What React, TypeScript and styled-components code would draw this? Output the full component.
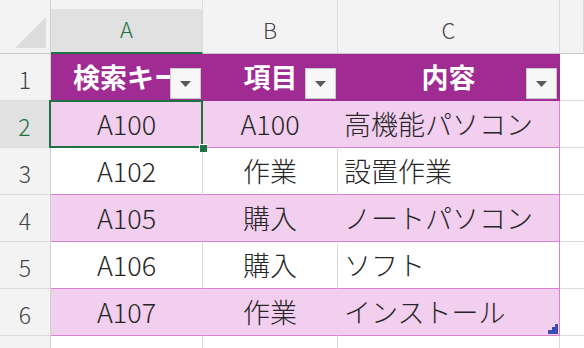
import React from "react";
import styled, { createGlobalStyle } from "styled-components";

const Global = createGlobalStyle`
  html, body { margin: 0; padding: 0; background: #ffffff; }
  body { font-family: "Noto Sans CJK JP", "Noto Sans", sans-serif; overflow: hidden; }
`;

const GREEN = "#1f7244";
const PURPLE = "#a02b93";
const PINK = "#f2ceef";
const PINK_LINE = "#d683cd";
const GRID = "#dadada";
const HEAD_BG = "#f3f3f3";
const HEAD_SEL = "#e1e1e1";

const Sheet = styled.div`
  display: grid;
  grid-template-columns: 51px 152px 135px 222px 1fr;
  grid-template-rows: 54px repeat(7, 47px);
  width: 584px;
  height: 348px;
  overflow: hidden;
`;

const Corner = styled.div`
  position: relative;
  background: ${HEAD_BG};
  border-right: 1px solid #d0d0d0;
  border-bottom: 1px solid #c8c8c8;
  box-sizing: border-box;
`;

const CornerTriangle = styled.svg`
  position: absolute;
  left: 15px;
  top: 17px;
`;

const ColHead = styled.div<{ $selected?: boolean }>`
  box-sizing: border-box;
  display: flex;
  align-items: center;
  justify-content: center;
  padding-top: 4px;
  font-size: 22px;
  font-weight: 300;
  color: ${(p) => (p.$selected ? GREEN : "#444444")};
  background: ${(p) =>
    p.$selected
      ? `linear-gradient(to bottom, ${HEAD_BG} 9px, ${HEAD_SEL} 9px)`
      : HEAD_BG};
  border-right: 1px solid #dcdcdc;
  border-bottom: ${(p) => (p.$selected ? `2px solid ${GREEN}` : "1px solid #c8c8c8")};
`;

const RowHead = styled.div<{ $selected?: boolean }>`
  box-sizing: border-box;
  text-align: center;
  line-height: 47px;
  padding-top: 2px;
  font-size: 23px;
  font-weight: 300;
  color: ${(p) => (p.$selected ? GREEN : "#444444")};
  background: ${(p) => (p.$selected ? HEAD_SEL : HEAD_BG)};
  border-right: ${(p) => (p.$selected ? `2px solid ${GREEN}` : "1px solid #d0d0d0")};
  border-bottom: 1px solid #dcdcdc;
`;

const HeaderCell = styled.div<{ $last?: boolean }>`
  position: relative;
  box-sizing: border-box;
  background: ${PURPLE};
  color: #ffffff;
  font-weight: 700;
  font-size: 27px;
  line-height: 46px;
  text-align: center;
  white-space: nowrap;
  overflow: hidden;
  border-right: ${(p) => (p.$last ? `1px solid ${PURPLE}` : "none")};
  border-bottom: 1px solid ${PURPLE};
`;

const FilterButton = styled.div`
  position: absolute;
  right: 2px;
  bottom: 1px;
  width: 31px;
  height: 31px;
  box-sizing: border-box;
  background: #f7f7f7;
  border: 1px solid #c9c9c9;
  display: flex;
  align-items: center;
  justify-content: center;
`;

const DataCell = styled.div<{
  $band: boolean;
  $align: "center" | "left";
  $last?: boolean;
}>`
  position: relative;
  box-sizing: border-box;
  background: ${(p) => (p.$band ? PINK : "#ffffff")};
  color: #262626;
  font-size: 27px;
  font-weight: 300;
  line-height: 46px;
  white-space: nowrap;
  text-align: ${(p) => p.$align};
  padding-left: ${(p) => (p.$align === "left" ? "6px" : "0")};
  border-bottom: 1px solid ${PINK_LINE};
  border-right: 1px solid
    ${(p) => (p.$last ? PINK_LINE : p.$band ? PINK : GRID)};
`;

const EmptyCell = styled.div<{ $lastCol?: boolean }>`
  box-sizing: border-box;
  background: #ffffff;
  border-bottom: 1px solid ${GRID};
  border-right: ${(p) => (p.$lastCol ? "none" : `1px solid ${GRID}`)};
`;

const Selection = styled.div`
  position: absolute;
  z-index: 2;
  left: -2px;
  top: -1px;
  right: -1px;
  bottom: -1px;
  border: 2px solid ${GREEN};
  pointer-events: none;
`;

const FillHandle = styled.div`
  position: absolute;
  right: -6px;
  bottom: -6px;
  width: 7px;
  height: 7px;
  background: ${GREEN};
  border-left: 1px solid #ffffff;
  border-top: 1px solid #ffffff;
`;

const ResizeHandle = styled.svg`
  position: absolute;
  right: 1px;
  bottom: 1px;
`;

const Arrow = () => (
  <svg width="11" height="6" viewBox="0 0 11 6">
    <polygon points="0,0 11,0 5.5,6" fill="#5a5a5a" />
  </svg>
);

type Row = { a: string; b: string; c: string };

const rows: Row[] = [
  { a: "A100", b: "A100", c: "高機能パソコン" },
  { a: "A102", b: "作業", c: "設置作業" },
  { a: "A105", b: "購入", c: "ノートパソコン" },
  { a: "A106", b: "購入", c: "ソフト" },
  { a: "A107", b: "作業", c: "インストール" },
];

const headers = ["検索キー", "項目", "内容"];

export default function App() {
  return (
    <>
      <Global />
      <Sheet>
        <Corner>
          <CornerTriangle width="31" height="31" viewBox="0 0 31 31">
            <polygon points="31,0 31,31 0,31" fill="#dcdcdc" />
          </CornerTriangle>
        </Corner>
        <ColHead $selected>A</ColHead>
        <ColHead>B</ColHead>
        <ColHead>C</ColHead>
        <ColHead />

        <RowHead>1</RowHead>
        {headers.map((h, i) => (
          <HeaderCell key={h} $last={i === headers.length - 1}>
            {h}
            <FilterButton>
              <Arrow />
            </FilterButton>
          </HeaderCell>
        ))}
        <EmptyCell $lastCol />

        {rows.map((r, i) => {
          const band = i % 2 === 0;
          const isLast = i === rows.length - 1;
          return (
            <React.Fragment key={r.a}>
              <RowHead $selected={i === 0}>{i + 2}</RowHead>
              <DataCell $band={band} $align="center">
                {r.a}
                {i === 0 && (
                  <Selection>
                    <FillHandle />
                  </Selection>
                )}
              </DataCell>
              <DataCell $band={band} $align="center">
                {r.b}
              </DataCell>
              <DataCell $band={band} $align="left" $last>
                {r.c}
                {isLast && (
                  <ResizeHandle width="10" height="10" viewBox="0 0 10 10">
                    <polygon
                      points="10,0 10,10 0,10 0,6 4,6 4,3 7,3 7,0"
                      fill="#3b4db0"
                    />
                  </ResizeHandle>
                )}
              </DataCell>
              <EmptyCell $lastCol />
            </React.Fragment>
          );
        })}

        <RowHead />
        <EmptyCell />
        <EmptyCell />
        <EmptyCell />
        <EmptyCell $lastCol />
      </Sheet>
    </>
  );
}
